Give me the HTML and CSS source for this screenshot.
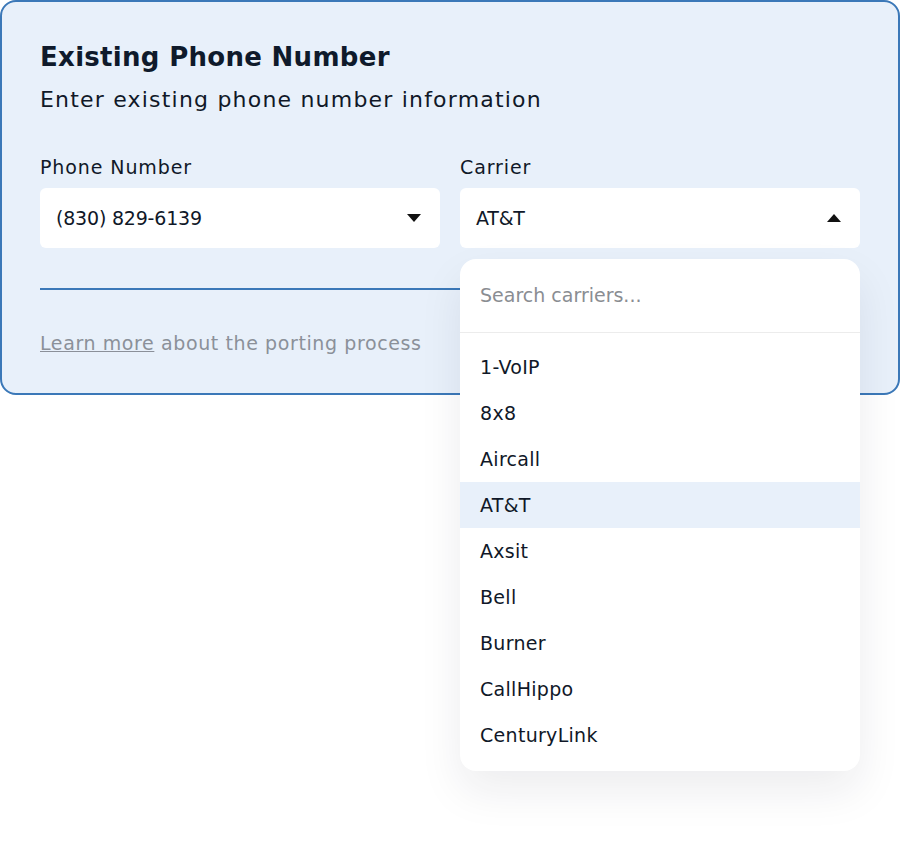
FILE: index.html
```html
<!DOCTYPE html>
<html lang="en">
<head>
  <meta charset="UTF-8">
  <meta name="viewport" content="width=device-width, initial-scale=1.0">
  <title>Existing Phone Number</title>
  <link rel="stylesheet" href="styles.css">
</head>
<body>

  <div class="page">
    <div class="card">
      <h2 class="title">Existing Phone Number</h2>
      <p class="subtitle">Enter existing phone number information</p>

      <div class="fields">
        <div class="field">
          <label class="label">Phone Number</label>
          <div class="select">
            <span>(830) 829-6139</span>
            <svg class="caret" width="14" height="8" viewBox="0 0 14 8"><path d="M0 0h14L7 8z" fill="#111"/></svg>
          </div>
        </div>

        <div class="field carrier">
          <label class="label">Carrier</label>
          <div class="select">
            <span>AT&amp;T</span>
            <svg class="caret" width="14" height="8" viewBox="0 0 14 8"><path d="M0 8h14L7 0z" fill="#111"/></svg>
          </div>

          <div class="dropdown">
            <div class="search">Search carriers...</div>
            <ul class="options">
              <li>1-VoIP</li>
              <li>8x8</li>
              <li>Aircall</li>
              <li class="active">AT&amp;T</li>
              <li>Axsit</li>
              <li>Bell</li>
              <li>Burner</li>
              <li>CallHippo</li>
              <li>CenturyLink</li>
            </ul>
          </div>
        </div>
      </div>

      <hr class="divider">

      <p class="note"><a href="#">Learn more</a> about the porting process</p>
    </div>
  </div>

</body>
</html>
```

FILE: styles.css
```css
body {
  margin: 0;
  background: #ffffff;
  font-family: "DejaVu Sans", "Noto Sans", sans-serif;
  color: #101828;
}
.page {
  min-height: 852px;
}
.card {
  box-sizing: border-box;
  width: 900px;
  border: 2px solid #3b78b8;
  border-radius: 16px;
  background: #e8f0fa;
  padding: 39px 40px 38px 38px;
}
.title {
  margin: 0;
  font-size: 26px;
  line-height: 32px;
  font-weight: bold;
  letter-spacing: 0.3px;
  color: #0f1a2b;
}
.subtitle {
  margin: 12px 0 0;
  font-size: 22px;
  line-height: 30px;
  letter-spacing: 1.2px;
}
.fields {
  display: grid;
  grid-template-columns: 400px 400px;
  gap: 20px;
  margin-top: 40px;
}
.field {
  position: relative;
}
.label {
  display: block;
  font-size: 19px;
  line-height: 24px;
  letter-spacing: 0.9px;
  margin-bottom: 9px;
}
.select {
  display: flex;
  align-items: center;
  justify-content: space-between;
  height: 60px;
  padding: 0 19px 0 16px;
  background: #ffffff;
  border-radius: 6px;
  font-size: 19px;
  letter-spacing: -0.2px;
}
.dropdown {
  position: absolute;
  top: 104px;
  left: 0;
  width: 400px;
  background: #ffffff;
  border-radius: 16px;
  box-shadow: 0 20px 44px rgba(20, 30, 50, 0.08);
  z-index: 2;
}
.search {
  height: 73px;
  line-height: 73px;
  padding: 0 20px;
  border-bottom: 1px solid #ececec;
  font-size: 19px;
  color: #8a8d92;
}
.options {
  list-style: none;
  margin: 0;
  padding: 11px 0 13px;
}
.options li {
  height: 46px;
  line-height: 46px;
  padding: 0 20px;
  font-size: 19px;
  letter-spacing: 0.3px;
}
.options li.active {
  background: #e8f0fa;
}
.divider {
  margin: 40px 0 0;
  border: 0;
  height: 2px;
  background: #3b78b8;
}
.note {
  margin: 41px 0 0;
  font-size: 19px;
  line-height: 24px;
  letter-spacing: 0.6px;
  color: #8b9099;
}
.note a {
  color: #8b9099;
}
```
